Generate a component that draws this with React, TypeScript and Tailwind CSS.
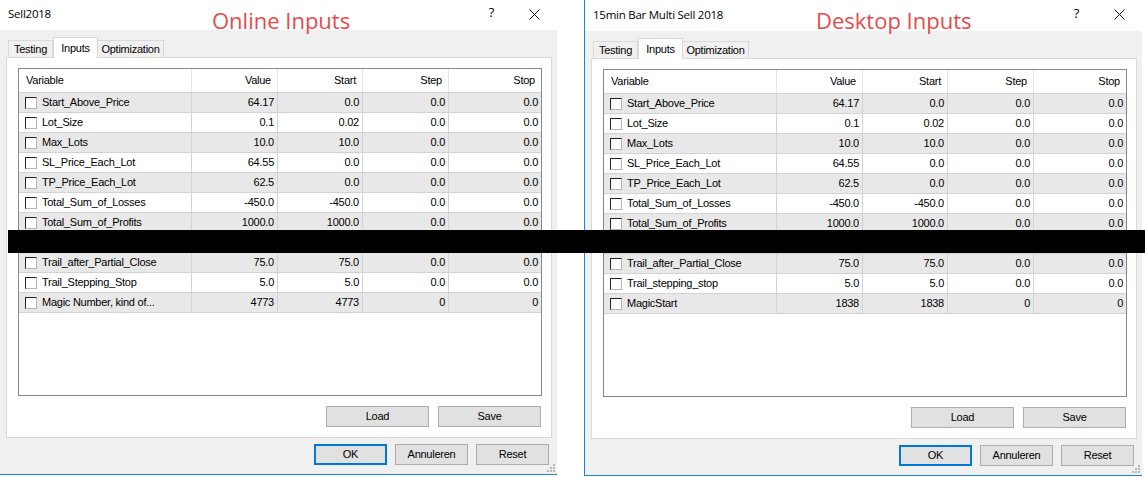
type Row = { name: string; value: string; start: string; step: string; stop: string } | null;

const online: Row[] = [
  { name: "Start_Above_Price", value: "64.17", start: "0.0", step: "0.0", stop: "0.0" },
  { name: "Lot_Size", value: "0.1", start: "0.02", step: "0.0", stop: "0.0" },
  { name: "Max_Lots", value: "10.0", start: "10.0", step: "0.0", stop: "0.0" },
  { name: "SL_Price_Each_Lot", value: "64.55", start: "0.0", step: "0.0", stop: "0.0" },
  { name: "TP_Price_Each_Lot", value: "62.5", start: "0.0", step: "0.0", stop: "0.0" },
  { name: "Total_Sum_of_Losses", value: "-450.0", start: "-450.0", step: "0.0", stop: "0.0" },
  { name: "Total_Sum_of_Profits", value: "1000.0", start: "1000.0", step: "0.0", stop: "0.0" },
  null,
  { name: "Trail_after_Partial_Close", value: "75.0", start: "75.0", step: "0.0", stop: "0.0" },
  { name: "Trail_Stepping_Stop", value: "5.0", start: "5.0", step: "0.0", stop: "0.0" },
  { name: "Magic Number, kind of...", value: "4773", start: "4773", step: "0", stop: "0" },
];

const desktop: Row[] = [
  ...online.slice(0, 9),
  { name: "Trail_stepping_stop", value: "5.0", start: "5.0", step: "0.0", stop: "0.0" },
  { name: "MagicStart", value: "1838", start: "1838", step: "0", stop: "0" },
];

const cols = "grid grid-cols-[173px_86px_85px_86px_1fr]";

function Checkbox() {
  return (
    <span className="block w-[12px] h-[12px] bg-white border border-t-[#222] border-l-[#222] border-r-[#b5b5b5] border-b-[#b5b5b5]" />
  );
}

function Btn({ label, w, primary }: { label: string; w: string; primary?: boolean }) {
  return (
    <div
      className={`${w} h-[21px] flex items-center justify-center bg-[#e1e1e1] text-black ${
        primary ? "border-2 border-[#0078d7]" : "border border-[#adadad]"
      }`}
    >
      {label}
    </div>
  );
}

function Table({ rows }: { rows: Row[] }) {
  return (
    <div className="ml-[11px] w-[524px] h-[328px] border border-[#828790] bg-white">
      <div className={`${cols} h-[24px] border-b border-[#d3d3d3]`}>
        <div className="pl-[7px] flex items-center border-r border-[#e5e5e5]">Variable</div>
        <div className="pr-[6px] flex items-center justify-end border-r border-[#e5e5e5]">Value</div>
        <div className="pr-[6px] flex items-center justify-end border-r border-[#e5e5e5]">Start</div>
        <div className="pr-[6px] flex items-center justify-end border-r border-[#e5e5e5]">Step</div>
        <div className="pr-[6px] flex items-center justify-end">Stop</div>
      </div>
      {rows.map((r, i) => (
        <div key={i} className={`${cols} h-[20px] ${i % 2 === 0 ? "bg-[#e8e8e8]" : "bg-white"}`}>
          <div className="pl-[6px] flex items-center gap-[5px] border-r border-b border-[#d3d3d3]">
            {r && <Checkbox />}
            {r && <span>{r.name}</span>}
          </div>
          <div className="pr-[3px] flex items-center justify-end border-r border-b border-[#d3d3d3]">{r?.value}</div>
          <div className="pr-[3px] flex items-center justify-end border-r border-b border-[#d3d3d3]">{r?.start}</div>
          <div className="pr-[3px] flex items-center justify-end border-r border-b border-[#d3d3d3]">{r?.step}</div>
          <div className="pr-[3px] flex items-center justify-end border-b border-[#d3d3d3]">{r?.stop}</div>
        </div>
      ))}
    </div>
  );
}

function Grip() {
  return (
    <svg width="8" height="8" viewBox="0 0 8 8" className="absolute right-[2px] bottom-[2px]">
      {[
        [6, 0],
        [3, 3],
        [6, 3],
        [0, 6],
        [3, 6],
        [6, 6],
      ].map(([x, y], i) => (
        <rect key={i} x={x} y={y} width="2" height="2" fill="#b8b8b8" />
      ))}
    </svg>
  );
}

function Dialog({ title, rows, right }: { title: string; rows: Row[]; right?: boolean }) {
  return (
    <div className={`relative flex flex-col w-[557px] ${right ? "h-[476px]" : "h-[475px]"} border-b border-[#1c84dc]`}>
      <div
        className={`${right ? "h-[31px]" : "h-[30px]"} bg-white flex items-center pl-[8px] text-[11.5px] text-black`}
        style={{ fontFamily: '"Open Sans", sans-serif' }}
      >
        <span className="-mt-[2px]">{title}</span>
        <span className="ml-auto mr-[35px] text-[13px] -mt-[4px]">?</span>
        <svg width="11" height="11" viewBox="0 0 11 11" className="mr-[17px] -mt-[2px]">
          <path d="M0.5 0.5 L10.5 10.5 M10.5 0.5 L0.5 10.5" stroke="#111" strokeWidth="1" />
        </svg>
      </div>
      <div className="relative flex-1 bg-[#f0f0f0] pt-[7px]">
        <div className="flex h-[20px] ml-[8px]">
          <div className="w-[45px] h-[17px] mt-[3px] border border-b-0 border-[#d9d9d9] flex items-center justify-center">
            Testing
          </div>
          <div className="relative z-10 w-[45px] h-[21px] border border-b-0 border-[#d9d9d9] bg-white flex items-start justify-center pt-[2px]">
            Inputs
          </div>
          <div className="w-[66px] h-[17px] mt-[3px] border border-b-0 border-l-0 border-[#d9d9d9] flex items-center justify-center">
            Optimization
          </div>
        </div>
        <div className="ml-[6px] w-[546px] h-[381px] border border-[#d9d9d9] bg-white pt-[10px]">
          <Table rows={rows} />
          <div className="ml-[11px] w-[523px] mt-[10px] flex justify-end gap-[9px]">
            <Btn label="Load" w="w-[103px]" />
            <Btn label="Save" w="w-[103px]" />
          </div>
        </div>
        <div className="mt-[6px] flex justify-end gap-[8px] pr-[8px]">
          <Btn label="OK" w="w-[73px]" primary />
          <Btn label="Annuleren" w="w-[73px]" />
          <Btn label="Reset" w="w-[73px]" />
        </div>
        <Grip />
      </div>
    </div>
  );
}

export default function App() {
  return (
    <div
      className="relative w-[1145px] h-[478px] bg-white overflow-hidden flex items-start text-[11px] tracking-[-0.25px] text-black"
      style={{ fontFamily: '"Liberation Sans", Arial, sans-serif' }}
    >
      <Dialog title="Sell2018" rows={online} />
      <div className="ml-[27px] border-l border-[#1c84dc]">
        <Dialog title="15min Bar Multi Sell 2018" rows={desktop} right />
      </div>

      <div
        className="absolute left-[212px] top-[9px] text-[22px] leading-[22px] tracking-normal text-[#e84a4a]"
        style={{ fontFamily: '"Open Sans", sans-serif' }}
      >
        Online Inputs
      </div>
      <div
        className="absolute left-[816px] top-[9px] text-[22px] leading-[22px] tracking-normal text-[#e84a4a]"
        style={{ fontFamily: '"Open Sans", sans-serif' }}
      >
        Desktop Inputs
      </div>

      <div className="absolute left-[8px] right-0 top-[230px] h-[23px] bg-black" />
    </div>
  );
}
